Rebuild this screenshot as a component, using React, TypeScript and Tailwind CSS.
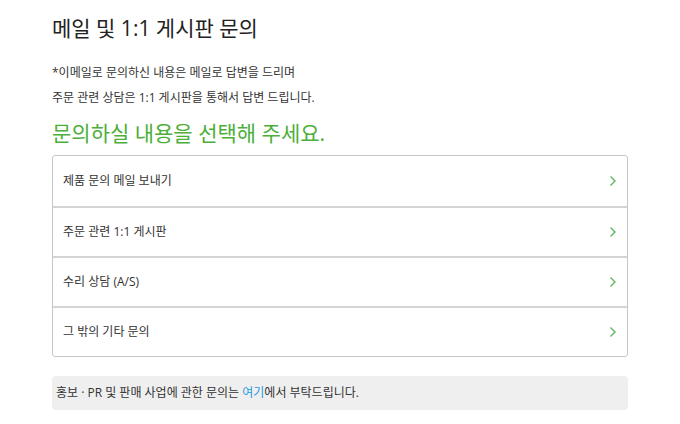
import React from "react";

const items = [
  "제품 문의 메일 보내기",
  "주문 관련 1:1 게시판",
  "수리 상담 (A/S)",
  "그 밖의 기타 문의",
];

const Chevron: React.FC = () => (
  <svg width="8" height="12" viewBox="0 0 8 12" fill="none">
    <path d="M1.5 1.5L6 6l-4.5 4.5" stroke="#5cb85c" strokeWidth="1.4" />
  </svg>
);

export default function App() {
  return (
    <div
      className="min-h-screen bg-white"
      style={{ fontFamily: '"Open Sans", "Noto Sans CJK KR", sans-serif' }}
    >
      <div className="mx-auto w-[576px] pt-[14px]">
        <h1 className="text-[21px] leading-[28px] text-[#222] font-normal">메일 및 1:1 게시판 문의</h1>

        <div className="mt-[18px] text-[12px] leading-[25px] text-[#333]">
          <p>*이메일로 문의하신 내용은 메일로 답변을 드리며</p>
          <p>주문 관련 상담은 1:1 게시판을 통해서 답변 드립니다.</p>
        </div>

        <h2 className="mt-[10px] text-[21px] leading-[26px] text-[#4caf3a] font-normal">
          문의하실 내용을 선택해 주세요.
        </h2>

        <ul className="mt-[9px] border border-[#c6c6c6] rounded-[3px]">
          {items.map((item, i) => (
            <li
              key={item}
              className={`flex items-center justify-between h-[50px] pl-[10px] pr-[10px] text-[12px] text-[#333] ${
                i > 0 ? "border-t-2 border-[#d4d4d4]" : ""
              }`}
            >
              <span>{item}</span>
              <Chevron />
            </li>
          ))}
        </ul>

        <div className="mt-[19px] h-[34px] flex items-center px-[4px] rounded-[4px] bg-[#efefef] text-[12px] text-[#333]">
          홍보 · PR 및 판매 사업에 관한 문의는&nbsp;<span className="text-[#1e9be0]">여기</span>에서 부탁드립니다.
        </div>
      </div>
    </div>
  );
}
